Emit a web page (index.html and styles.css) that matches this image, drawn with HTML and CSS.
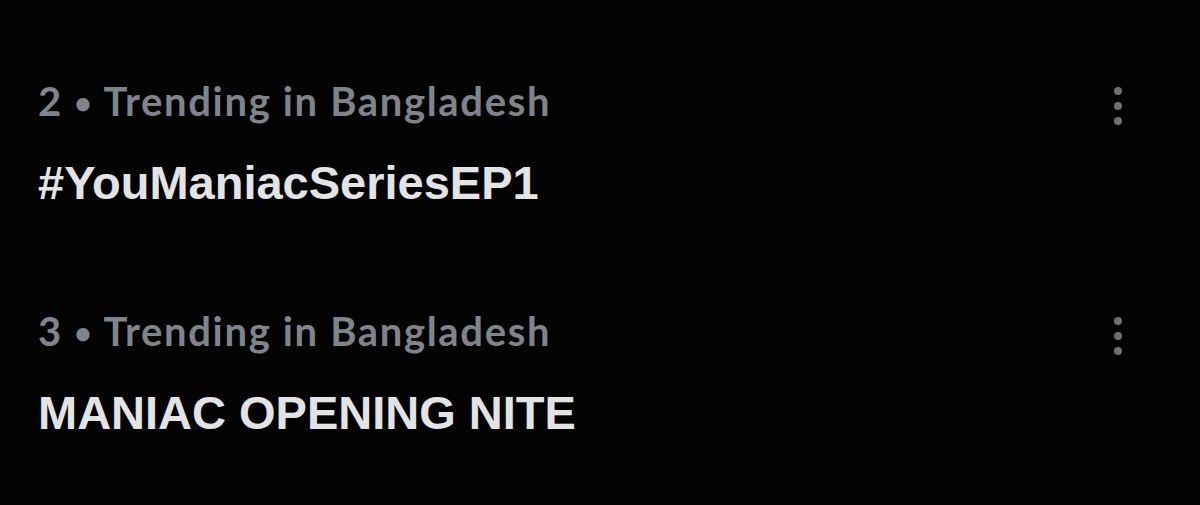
FILE: index.html
```
<!DOCTYPE html>
<html lang="en">

<head>
  <meta charset="UTF-8" />
  <meta name="viewport" content="width=device-width, initial-scale=1.0" />
  <title>Trending</title>
  <link rel="stylesheet" href="styles.css">
</head>

<body>
  <div class="trends">
    <div class="trend">
      <div class="info">
        <div class="meta">2 <span class="dot">•</span> Trending in Bangladesh</div>
        <div class="title">#YouManiacSeriesEP1</div>
      </div>
      <div class="more">
        <svg width="10" height="40" viewBox="0 0 10 40">
          <circle cx="5" cy="5" r="4" />
          <circle cx="5" cy="20" r="4" />
          <circle cx="5" cy="35" r="4" />
        </svg>
      </div>
    </div>

    <div class="trend">
      <div class="info">
        <div class="meta">3 <span class="dot">•</span> Trending in Bangladesh</div>
        <div class="title">MANIAC OPENING NITE</div>
      </div>
      <div class="more">
        <svg width="10" height="40" viewBox="0 0 10 40">
          <circle cx="5" cy="5" r="4" />
          <circle cx="5" cy="20" r="4" />
          <circle cx="5" cy="35" r="4" />
        </svg>
      </div>
    </div>
  </div>
</body>

</html>
```

FILE: styles.css
```
html,
body {
  margin: 0;
  height: 100%;
  overflow: hidden;
  background: #030303;
}

.trends {
  padding: 77px 0 0 38px;
}

.trend {
  display: flex;
  justify-content: space-between;
  height: 230px;
}

.trend:last-child {
  height: auto;
}

.info {
  display: flex;
  flex-direction: column;
}

.meta {
  font-family: Lato, "Noto Sans", sans-serif;
  font-weight: 700;
  font-size: 40px;
  line-height: 48px;
  letter-spacing: 1.65px;
  color: #7f848a;
}

.meta .dot {
  font-size: 30px;
  vertical-align: 2px;
}

.title {
  margin-top: 29px;
  font-family: "Liberation Sans", Arial, sans-serif;
  font-weight: 700;
  font-size: 47px;
  line-height: 56px;
  color: #e2e3e4;
}

.more {
  width: 120px;
  padding-top: 9px;
  box-sizing: border-box;
}

.more svg {
  display: block;
  margin-left: 33px;
  fill: #6c7075;
}
```
